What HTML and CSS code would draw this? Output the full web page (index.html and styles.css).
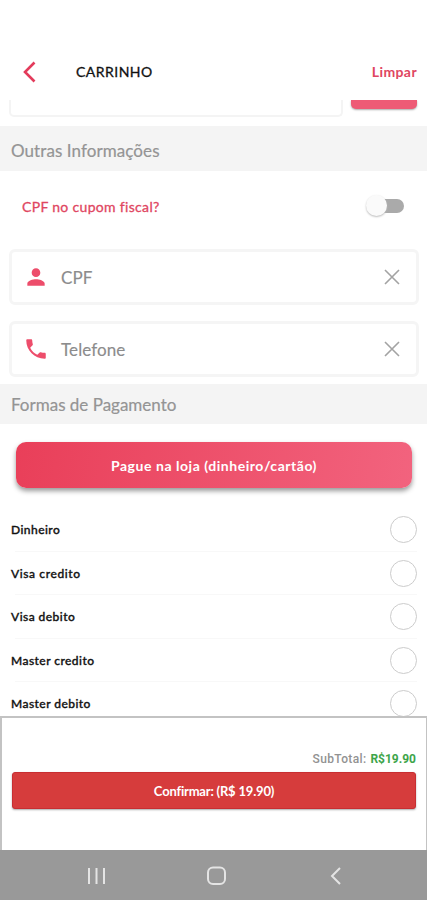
FILE: index.html
```html
<!DOCTYPE html>
<html lang="pt-BR">
<head>
<meta charset="utf-8">
<meta name="viewport" content="width=device-width, initial-scale=1">
<title>Carrinho</title>
<link rel="stylesheet" href="styles.css">
</head>
<body>
<div class="app">
  <header class="topbar">
    <svg class="back" width="14" height="22" viewBox="0 0 14 22"><path d="M12.500 1.500 3 11l9.500 9.500"/></svg>
    <h1 class="title">CARRINHO</h1>
    <span class="clear">Limpar</span>
  </header>
  <main class="content">
    <div class="coupon"><div class="coupon-input"></div><div class="coupon-button"></div></div>
    <h2 class="section section-info"><span>Outras Informações</span></h2>
    <div class="switch-row">
      <span class="switch-label">CPF no cupom fiscal?</span>
      <span class="switch"><i class="track"></i><i class="thumb"></i></span>
    </div>
    <div class="fields">
      <div class="field">
        <svg class="field-icon" width="26" height="26" viewBox="0 0 24 24"><path d="M12 12c2.210 0 4-1.790 4-4s-1.790-4-4-4-4 1.790-4 4 1.790 4 4 4zm0 2c-2.670 0-8 1.340-8 4v2h16v-2c0-2.660-5.330-4-8-4z"/></svg>
        <span class="field-text">CPF</span>
        <svg class="close" width="16" height="16" viewBox="0 0 16 16"><path d="m1 1 14 14M15 1 1 15"/></svg>
      </div>
      <div class="field">
        <svg class="field-icon" width="26" height="26" viewBox="0 0 24 24"><path d="M6.620 10.790c1.440 2.830 3.760 5.140 6.590 6.590l2.200-2.200c.27-.27.67-.36 1.020-.24 1.120.37 2.330.57 3.570.57.55 0 1 .45 1 1V20c0 .55-.45 1-1 1-9.390 0-17-7.610-17-17 0-.55.45-1 1-1h3.500c.55 0 1 .45 1 1 0 1.250.2 2.450.57 3.570.11.35.03.74-.25 1.020l-2.200 2.200z"/></svg>
        <span class="field-text">Telefone</span>
        <svg class="close" width="16" height="16" viewBox="0 0 16 16"><path d="m1 1 14 14M15 1 1 15"/></svg>
      </div>
    </div>
    <h2 class="section section-pay"><span>Formas de Pagamento</span></h2>
    <button class="store"><span>Pague na loja (dinheiro/cartão)</span></button>
    <ul class="methods">
      <li><span>Dinheiro</span><i class="radio"></i></li>
      <li><span class="wide">Visa credito</span><i class="radio"></i></li>
      <li><span>Visa debito</span><i class="radio"></i></li>
      <li><span>Master credito</span><i class="radio"></i></li>
      <li><span>Master debito</span><i class="radio"></i></li>
    </ul>
  </main>
  <footer class="summary">
    <div class="subtotal"><span class="sub-label">SubTotal:</span><b>R$19.90</b></div>
    <button class="confirm"><span>Confirmar: (R$ 19.90)</span></button>
  </footer>
  <nav class="navbar">
    <svg width="18" height="18" viewBox="0 0 18 18"><path d="M2 1v16M9.500 1v16M17 1v16"/></svg>
    <svg width="20" height="20" viewBox="0 0 20 20"><rect x="1" y="1.500" width="17" height="16.500" rx="5"/></svg>
    <svg width="12" height="18" viewBox="0 0 12 18"><path d="M11 1 3 9l8 8"/></svg>
  </nav>
</div>
</body>
</html>
```
FILE: styles.css
```css
* { box-sizing: border-box; }
body { margin: 0; background: #fff; font-family: Lato, "Liberation Sans", sans-serif; color: #111; }
h1, h2, ul { margin: 0; padding: 0; }
button { border: 0; padding: 0; color: #fff; font-family: inherit; }
svg { display: block; fill: none; flex: none; }
.app { height: 900px; display: flex; flex-direction: column; overflow: hidden; }
.topbar { height: 100px; flex: none; padding: 43px 10px 0 22px; display: flex; align-items: center; }
.back { stroke: #e33b5b; stroke-width: 2.600; }
.title { margin-left: 40px; font-size: 14px; font-weight: 400; letter-spacing: .48px; color: #111; -webkit-text-stroke: .3px; }
.clear { margin-left: auto; font-size: 14px; font-weight: 700; color: #df4661; letter-spacing: .4px; }
.content { height: 616px; flex: none; overflow: hidden; }
.coupon { height: 26px; padding: 0 10px 0 9px; display: flex; justify-content: space-between; align-items: flex-start; }
.coupon-input { width: 334px; height: 17px; border: 2px solid #f4f4f4; border-top: 0; border-radius: 0 0 5px 5px; }
.coupon-button { width: 66px; height: 9px; background: #ee5b76; border-radius: 0 0 5px 5px; box-shadow: 0 1px 2px #aaa; }
.section { background: #f4f4f4; padding-left: 11px; display: flex; align-items: center; color: #949494; font-weight: 400; font-size: 17px; letter-spacing: .08px; -webkit-text-stroke: .2px; }
.section-info { height: 45px; padding-top: 3px; }
.section-pay { height: 40px; padding-top: 1px; letter-spacing: 0; }
.switch-row { height: 78px; padding: 0 23px 8px 22px; display: flex; align-items: center; justify-content: space-between; }
.switch-label { color: #df4661; font-size: 14px; letter-spacing: .32px; -webkit-text-stroke: .3px; }
.switch { width: 38px; height: 24px; position: relative; }
.track { position: absolute; right: 0; top: 5px; width: 32px; height: 14px; border-radius: 8px; background: #aaa; }
.thumb { position: absolute; left: 0; top: 1px; width: 21px; height: 21px; border-radius: 50%; background: #fafafa; box-shadow: 0 1px 2px #bbb; }
.fields { height: 135px; padding: 0 8px 0 9px; display: flex; flex-direction: column; gap: 16px; }
.field { height: 56px; border: 3px solid #f5f5f5; border-radius: 6px; padding: 0 16px 0 11px; display: flex; align-items: center; flex: none; }
.field-icon { fill: #ed4d6b; }
.field-text { margin-left: 12px; font-size: 17px; letter-spacing: .1px; color: #8c8c8c; -webkit-text-stroke: .15px; }
.close { margin-left: auto; stroke: #a3a3a3; stroke-width: 1.600; }
.store { display: flex; align-items: center; justify-content: center; width: 396px; height: 46px; margin: 18px 15px 0 16px; border-radius: 10px; background: linear-gradient(100deg, #e93f59, #f2637e); box-shadow: 0 3px 5px #999; font-size: 14px; letter-spacing: .54px; font-weight: 700; padding-top: 1px; }
.methods { list-style: none; margin-top: 20px; }
.methods li { height: 43.500px; padding: 0 10px 0 11px; display: flex; align-items: center; justify-content: space-between; background: linear-gradient(#f8f8f8, #f8f8f8) 15px bottom / 402px 1px no-repeat; font-size: 12px; font-weight: 500; letter-spacing: .45px; color: #111; -webkit-text-stroke: .35px; }
.methods .wide { letter-spacing: .6px; }
.radio { width: 27px; height: 27px; border: 1.500px solid #ccc; border-radius: 50%; }
.summary { height: 134px; flex: none; border: 2px solid #c3c3c3; border-right-width: 1px; border-bottom: 0; padding: 34px 10px 0 10px; background: #fff; }
.subtotal { height: 20px; display: flex; justify-content: flex-end; gap: 4px; line-height: 14px; font-family: Roboto, sans-serif; font-size: 12px; color: #929292; }
.sub-label { font-weight: 500; letter-spacing: .35px; }
.subtotal b { color: #3da54a; }
.confirm { display: flex; align-items: center; justify-content: center; width: 404px; height: 37px; border: 1px solid #c82e32; border-radius: 3px; background: #d63c3c; box-shadow: 0 1px 2px #aaa; font-size: 13px; letter-spacing: -.19px; font-weight: 700; }
.navbar { height: 50px; flex: none; background: #999; padding: 1px 86px 0 87px; display: flex; align-items: center; justify-content: space-between; }
.navbar svg { stroke: #e4e4e4; stroke-width: 2; }
```
